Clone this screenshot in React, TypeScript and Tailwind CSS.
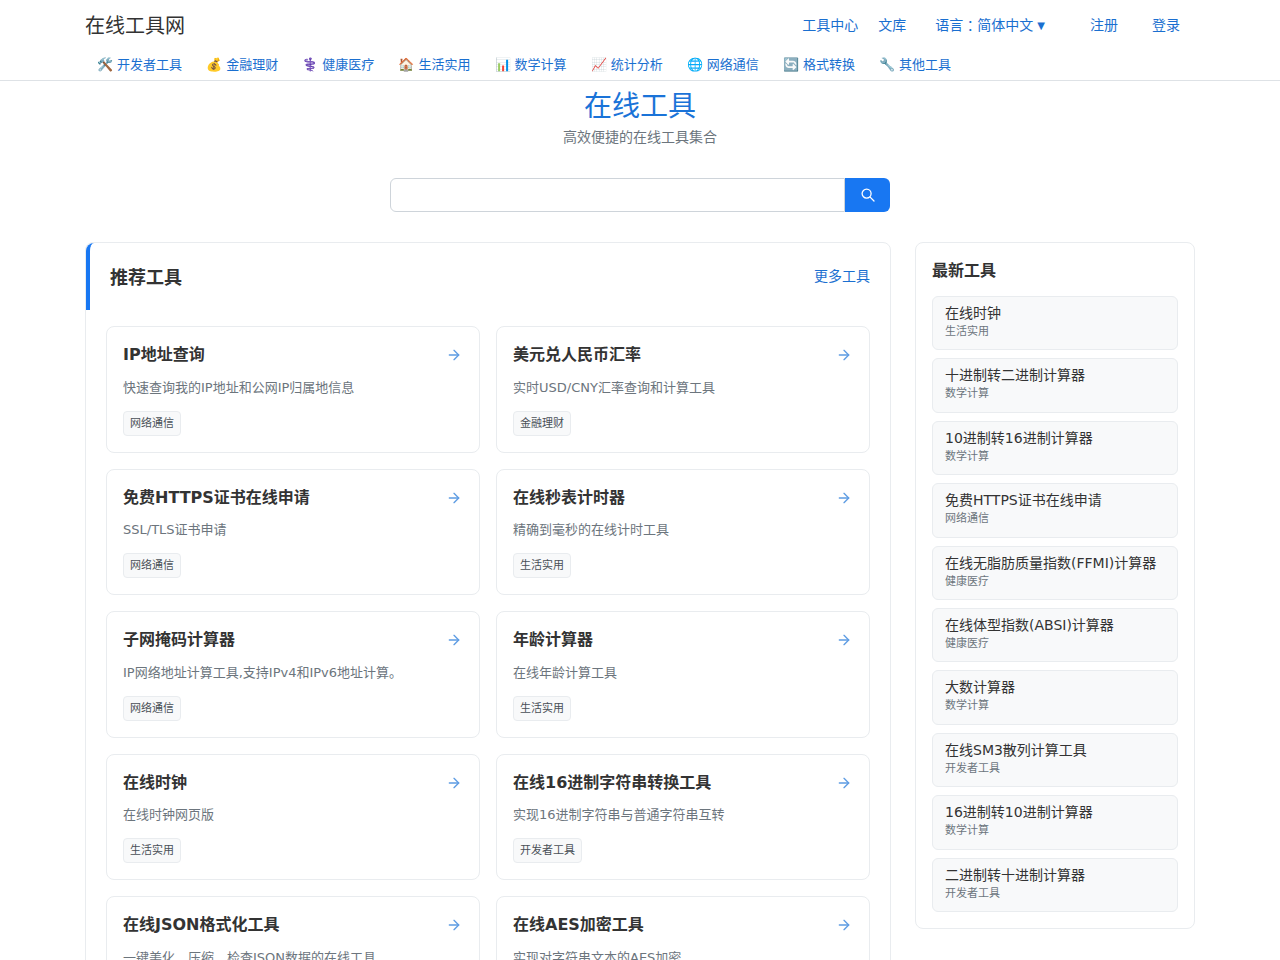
import { ArrowRight } from 'lucide-react';

const font = 'font-["DejaVu_Sans","Noto_Sans_CJK_SC",sans-serif]';

const categories = [
  { icon: '🛠️', name: '开发者工具' },
  { icon: '💰', name: '金融理财' },
  { icon: '⚕️', name: '健康医疗' },
  { icon: '🏠', name: '生活实用' },
  { icon: '📊', name: '数学计算' },
  { icon: '📈', name: '统计分析' },
  { icon: '🌐', name: '网络通信' },
  { icon: '🔄', name: '格式转换' },
  { icon: '🔧', name: '其他工具' },
];

const tools = [
  { title: 'IP地址查询', desc: '快速查询我的IP地址和公网IP归属地信息', tag: '网络通信' },
  { title: '美元兑人民币汇率', desc: '实时USD/CNY汇率查询和计算工具', tag: '金融理财' },
  { title: '免费HTTPS证书在线申请', desc: 'SSL/TLS证书申请', tag: '网络通信' },
  { title: '在线秒表计时器', desc: '精确到毫秒的在线计时工具', tag: '生活实用' },
  { title: '子网掩码计算器', desc: 'IP网络地址计算工具,支持IPv4和IPv6地址计算。', tag: '网络通信' },
  { title: '年龄计算器', desc: '在线年龄计算工具', tag: '生活实用' },
  { title: '在线时钟', desc: '在线时钟网页版', tag: '生活实用' },
  { title: '在线16进制字符串转换工具', desc: '实现16进制字符串与普通字符串互转', tag: '开发者工具' },
  { title: '在线JSON格式化工具', desc: '一键美化、压缩、检查JSON数据的在线工具', tag: '开发者工具' },
  { title: '在线AES加密工具', desc: '实现对字符串文本的AES加密', tag: '开发者工具' },
];

const latest = [
  { title: '在线时钟', tag: '生活实用' },
  { title: '十进制转二进制计算器', tag: '数学计算' },
  { title: '10进制转16进制计算器', tag: '数学计算' },
  { title: '免费HTTPS证书在线申请', tag: '网络通信' },
  { title: '在线无脂肪质量指数(FFMI)计算器', tag: '健康医疗' },
  { title: '在线体型指数(ABSI)计算器', tag: '健康医疗' },
  { title: '大数计算器', tag: '数学计算' },
  { title: '在线SM3散列计算工具', tag: '开发者工具' },
  { title: '16进制转10进制计算器', tag: '数学计算' },
  { title: '二进制转十进制计算器', tag: '开发者工具' },
];

const App = () => {
  return (
    <div className={`h-[960px] overflow-hidden bg-white text-[#212529] ${font}`}>
      <header className="h-[81px] border-b border-[#dee2e6]">
        <div className="w-[1110px] mx-auto">
          <div className="flex items-center h-[50px]">
            <a className="text-xl leading-[30px] pt-[2px] text-[#333]">在线工具网</a>
            <div className="ml-auto flex items-center text-sm text-[#1a6fd0]">
              <a>工具中心</a>
              <a className="ml-[20px]">文库</a>
              <a className="ml-[29px] flex items-center">
                语言<span className='font-["Noto_Sans_CJK_TC"]'>：</span>简体中文
                <span className="ml-[4px] pt-[2px] text-[10px]">▼</span>
              </a>
              <a className="ml-[45px]">注册</a>
              <a className="ml-[34px] mr-[15px]">登录</a>
            </div>
          </div>
          <nav className="flex items-center pl-[12px] gap-[24.12px] h-[30px] text-[13px] text-[#1a6fd0]">
            {categories.map(c => (
              <a key={c.name} className="flex items-center gap-[4px] whitespace-nowrap">
                <span className="text-[#6c757d]">{c.icon}</span>
                {c.name}
              </a>
            ))}
          </nav>
        </div>
      </header>

      <div className="text-center">
        <h1 className="text-[28px] leading-[34px] mt-[9px] text-[#1a73d8]">在线工具</h1>
        <p className="text-sm leading-[21px] mt-[3px] text-[#6c757d]">高效便捷的在线工具集合</p>
      </div>

      <div className="flex w-[500px] h-[34px] mx-auto mt-[30px]">
        <input className="flex-1 min-w-0 border border-[#ced4da] rounded-l-md outline-none" />
        <button className="w-[45px] flex items-center justify-center bg-[#1877f2] rounded-r-md text-white">
          <svg width="14" height="14" viewBox="0 0 14 14" fill="none" stroke="currentColor" strokeWidth="1.3" strokeLinecap="round">
            <circle cx="5.6" cy="5.6" r="4.5" />
            <line x1="8.9" y1="8.9" x2="13" y2="13" />
          </svg>
        </button>
      </div>

      <div className="flex items-start w-[1110px] mx-auto mt-[30px] gap-[24px]">
        <main className="w-[806px] shrink-0 border border-[#e9ecef] rounded-lg">
          <div className="flex items-center justify-between h-[67px] pl-[20px] pr-[20px] border-l-4 border-[#1877f2] rounded-tl-lg">
            <h2 className="text-lg font-semibold pt-[2px] text-[#333]">推荐工具</h2>
            <a className="text-sm pb-[1px] text-[#1a6fd0]">更多工具</a>
          </div>
          <div className="grid grid-cols-2 gap-4 px-[20px] pt-[16px]">
            {tools.map(t => (
              <div key={t.title} className="h-[126.5px] border border-[#e9ecef] rounded-lg px-4 pt-[16px]">
                <div className="flex items-center justify-between">
                  <h3 className="text-base leading-[24px] font-semibold text-[#333]">{t.title}</h3>
                  <ArrowRight size={16} className="text-[#1a73d8] opacity-70 mr-[1px]" />
                </div>
                <p className="text-[13px] leading-[20px] mt-[10.7px] text-[#6c757d]">{t.desc}</p>
                <span className="inline-block mt-[13px] px-[6px] text-[11px] leading-[23px] text-[#495057] bg-[#f8f9fa] border border-[#e9ecef] rounded">
                  {t.tag}
                </span>
              </div>
            ))}
          </div>
        </main>

        <aside className="w-[280px] shrink-0 border border-[#e9ecef] rounded-lg px-4 pt-4 pb-4">
          <h2 className="text-base leading-[24px] font-semibold text-[#333] mb-[13px]">最新工具</h2>
          <div className="flex flex-col gap-[8px]">
            {latest.map(l => (
              <div key={l.title} className="h-[54.4px] bg-[#f8f9fa] border border-[#e9ecef] rounded-md px-3 pt-[6px]">
                <div className="text-sm leading-[21px] text-[#333] whitespace-nowrap">{l.title}</div>
                <div className="text-[11px] leading-[16.8px] text-[#6c757d]">{l.tag}</div>
              </div>
            ))}
          </div>
        </aside>
      </div>
    </div>
  );
};

export default App;
